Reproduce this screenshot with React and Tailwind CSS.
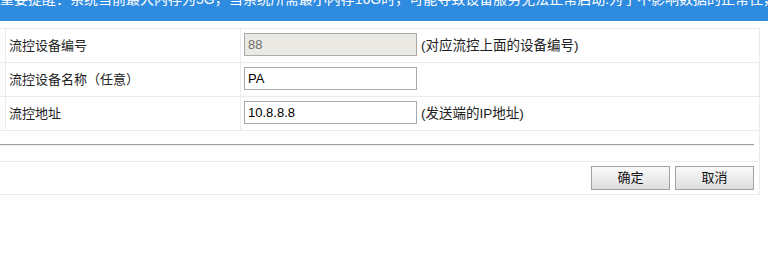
import React from 'react';

const FONT = { fontFamily: '"Liberation Sans", "Noto Sans CJK SC", sans-serif' };

const rows = [
  { label: '流控设备编号', value: '88', disabled: true, hint: '(对应流控上面的设备编号)' },
  { label: '流控设备名称（任意）', value: 'PA' },
  { label: '流控地址', value: '10.8.8.8', hint: '(发送端的IP地址)' },
];

const Row = ({ label, value, disabled, hint }) => (
  <div className="flex h-[34px] border-b border-[#ebebeb]">
    <div className="w-[6px] border-r border-[#ebebeb]" />
    <div className="w-[235px] border-r border-[#ebebeb] pl-[3px] flex items-center text-[13px] text-[#222]">
      {label}
    </div>
    <div className="flex-1 pl-[3px] pt-[4px] flex items-start">
      <input
        readOnly
        value={value}
        disabled={disabled}
        className={`w-[173px] h-[23px] border border-[#a9a9a9] px-[3px] text-[13px] outline-none ${
          disabled ? 'bg-[#ebe9e3] text-[#6d6d6d]' : 'bg-white text-black'
        }`}
        style={FONT}
      />
      {hint && <span className="ml-[4px] mt-[3px] text-[13.5px] text-[#222]">{hint}</span>}
    </div>
  </div>
);

export default function App() {
  return (
    <div className="w-[768px] h-[253px] bg-white overflow-hidden" style={FONT}>
      {/* top notice, scrolled partly out of view */}
      <div className="h-[21px] bg-[#2e8be0] overflow-hidden">
        <div className="-mt-[9px] text-[14px] leading-[16px] text-white whitespace-nowrap">
          重要提醒：系统当前最大内存为5G，当系统所需最小内存16G时，可能导致设备服务无法正常启动.为了不影响数据的正常往，
        </div>
      </div>

      <div className="mt-[7px] w-[760px] border-r border-[#ebebeb]">
        <div className="border-t border-[#ebebeb]">
          {rows.map((r) => (
            <Row key={r.label} {...r} />
          ))}
        </div>

        {/* separator */}
        <div className="h-[31px] border-b border-[#ebebeb] pt-[13px]">
          <div className="w-[754px] border-t border-[#a0a0a0] border-b border-b-[#eeeeee] h-[2px]" />
        </div>

        {/* actions */}
        <div className="h-[33px] border-b border-[#ebebeb] flex justify-end items-start pt-[4px] pr-[5px] gap-[5px]">
          {['确定', '取消'].map((t) => (
            <button
              key={t}
              className="w-[79px] h-[24px] border border-[#a0a0a0] bg-gradient-to-b from-[#fafafa] to-[#dedede] text-[13px] text-[#111]"
              style={FONT}
            >
              {t}
            </button>
          ))}
        </div>
      </div>
    </div>
  );
}
